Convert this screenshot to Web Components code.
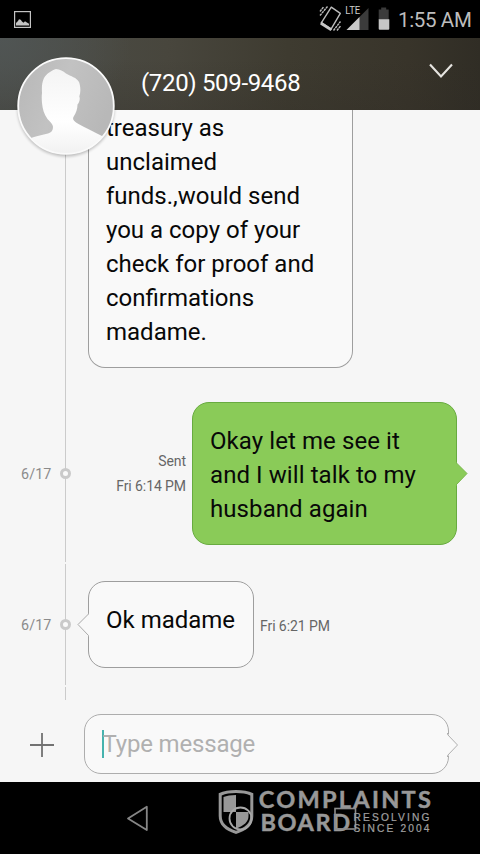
<!DOCTYPE html>
<html lang="en">
<head>
<meta charset="utf-8">
<title>Messages</title>
<style>
html,body{margin:0;height:100%;background:#000}
body{font-family:Roboto,"Liberation Sans",sans-serif}
</style>
</head>
<body>
<phone-screen></phone-screen>
<script>
const define = (name, html) => {
  const t = document.createElement('template');
  t.innerHTML = html;
  customElements.define(name, class extends HTMLElement {
    constructor() {
      super();
      this.attachShadow({ mode: 'open' }).appendChild(t.content.cloneNode(true));
    }
  });
};

define('status-bar', `
<style>
:host{display:flex;align-items:center;height:38px;background:#000;color:#bdbdbd;box-sizing:border-box;padding:0 9px 0 14px}
svg{display:block;flex:none}
.sp{flex:1}
.time{font-size:20.5px;line-height:38px;padding-top:2px;margin-left:7px;width:73px;white-space:nowrap;letter-spacing:-.35px}
</style>
<svg width="17" height="17" viewBox="0 0 17 17"><rect x=".6" y=".6" width="15.8" height="15.8" fill="none" stroke="#c4c4c4" stroke-width="1.2"/><path d="M2 14.500V12l2-2 1-1.700 1.700.5L8 10.500l1.500 1.300 1.500-1.500 1.500 1 2.500 1.400v1.800z" fill="#c4c4c4"/></svg>
<span class="sp"></span>
<svg width="73" height="38" viewBox="0 0 73 38">
<path d="M13.300 7.200 22.300 13.300 13.200 28.800 3.300 22.800z" fill="none" stroke="#bdbdbd" stroke-width="1.400" stroke-linejoin="round"/>
<path d="M3.200 21.500 2.200 24.500 12.500 31l1.700-2z" fill="#c6c6c6"/>
<path d="M2 11.500 5.500 7M2 15.500 9.500 6.500M15.500 30.500 22.500 21.500M19 30.500 22.500 26" stroke="#bdbdbd" stroke-width="1.400" stroke-dasharray="2.500 .6"/>
<path d="M50.500 8v22H28.500z" fill="#3b3b3b"/><path d="M41.500 17v13H28.500z" fill="#cacaca"/>
<rect x="26" y="5" width="16" height="10.500" fill="#000"/>
<text x="27.300" y="14.200" font-family="Roboto,sans-serif" font-size="10.300" fill="#cdcdcd" textLength="15" lengthAdjust="spacingAndGlyphs">LTE</text>
<path d="M60.700 9.500h2.500V7.500h5v2h2.500V20h-10z" fill="#3b3b3b"/><path d="M60.700 19.300h10.600v9.400q0 1-1 1h-8.600q-1 0-1-1z" fill="#c6c6c6"/>
</svg>
<span class="time">1:55 AM</span>`);

define('contact-header', `
<style>
:host{display:flex;height:72px;position:relative;z-index:2;color:#fff;
background:radial-gradient(ellipse 130px 110px at 0 0,#505554,#50555400),linear-gradient(180deg,#2f2b2500 30%,#2f2b2540),linear-gradient(90deg,#4b4d48,#48463d 35%,#3e3b30 60%,#38342a 85%,#302d25)}
.name{margin:30px 0 0 141px;font-size:24px;line-height:30px;white-space:nowrap;letter-spacing:-.34px}
.chev{margin:24px 26px 0 auto;display:block}
.avatar{position:absolute;left:15px;top:17px;display:block}
</style>
<span class="name"><slot></slot></span>
<svg class="chev" width="26" height="18" viewBox="0 0 26 18"><path d="M2 2.500 13 14.500 24 2.500" fill="none" stroke="#e6e4e0" stroke-width="2.100"/></svg>
<svg class="avatar" width="102" height="106" viewBox="0 0 102 106">
<defs><linearGradient id="g" x2="0" y2="1"><stop offset="0" stop-color="#f4f4f4"/><stop offset=".6" stop-color="#fff"/><stop offset="1" stop-color="#f0f0f0"/></linearGradient>
<linearGradient id="b" x2="1" y2=".4"><stop offset="0" stop-color="#b7b7b7"/><stop offset=".5" stop-color="#c2c2c2"/><stop offset="1" stop-color="#b8b8b8"/></linearGradient>
<clipPath id="c"><circle cx="51" cy="51" r="48"/></clipPath>
<filter id="s" x="-10%" y="-10%" width="120%" height="125%"><feGaussianBlur stdDeviation="1.500"/></filter></defs>
<circle cx="51" cy="53" r="48.500" fill="#000" opacity=".24" filter="url(#s)"/>
<circle cx="51" cy="51" r="48" fill="url(#b)"/>
<path clip-path="url(#c)" fill="url(#g)" d="M41 14C37 15.500 32 18 29 23 26.500 28 26.800 34 27 38c-.5 4-.2 7 0 10 .5 6 2 11 5.500 16 2.500 3 5.500 5 5.500 8 0 3.500-1.500 5.500-5 6.500C26 80 19 81.500 14 84 6 88 2 92 2 102h98V86c-4-1-8-2-14-5.500-8-4-16-8-22.500-11.500C58 66 57 64 59 61c2-3 3.500-7 3.500-11.500C64 48 65.500 44 64.300 41.500 66 37 65.500 31 64 27 61.500 22.500 56 21.500 51 18.500 48 16 45 14.500 41 14z"/>
<circle cx="51" cy="51" r="47.800" fill="none" stroke="#fafafa" stroke-width="1.800"/>
</svg>`);

define('timeline-row', `
<style>
:host{display:flex;align-items:center;position:relative;flex:none;box-sizing:border-box;padding-left:88px;
background:linear-gradient(#cbcbcb,#cbcbcb) 65px 0/1px 100% no-repeat}
:host([out]){justify-content:flex-end;padding-right:23px}
.date{position:absolute;left:21px;top:50%;margin-top:-10px;font-size:14.300px;line-height:20px;color:#8b8b8b;white-space:nowrap;letter-spacing:.1px}
.dot{position:absolute;left:60px;top:50%;margin-top:-5.500px;width:11px;height:11px;box-sizing:border-box;border:3.200px solid #cacaca;border-radius:50%;background:#fafafa}
:host([plain]) .dot,:host([plain]) .date{display:none}
</style>
<span class="date"><slot name="date"></slot></span><i class="dot"></i>
<slot></slot>`);

define('message-bubble', `
<style>
:host{display:block;position:relative;box-sizing:border-box;border:1px solid #9e9e9e;border-radius:17px;background:#f9f9f9;padding:21px 17px 18px;font-size:24px;line-height:34px;color:#080808;white-space:nowrap}
:host([side=out]){background:#8acb58;border-color:#68ab40;letter-spacing:.08px}
:host([cut]){border-top:0;border-radius:0 0 17px 17px;padding-top:0}
svg{position:absolute;top:50%;display:none}
:host([side=in]) .l{display:block;left:-12px;margin-top:-11.500px}
:host([side=out]) .r{display:block;right:-12px;margin-top:-12px}
</style>
<slot></slot>
<svg class="l" width="13" height="24" viewBox="0 0 13 24"><path d="M13 .5 11.500 1 1 12l10.500 11 1.500.5z" fill="#f9f9f9"/><path d="M11.500 0V1L1 11.500 11.500 22.500V24" fill="none" stroke="#aaa"/></svg>
<svg class="r" width="13" height="24" viewBox="0 0 13 24"><path d="M0 0 1.500 1 12 11.500 1.500 22.500 0 23z" fill="#8acb58"/><path d="M1.500 0V1L12 11.500 1.500 22.500V24" fill="none" stroke="#78b84b"/></svg>`);

define('message-meta', `
<style>:host{display:block;font-size:14px;line-height:25px;color:#666;white-space:nowrap;text-align:right;margin:0 6px;letter-spacing:-.08px}
:host([low]){padding-top:4px}</style><slot></slot>`);

define('message-composer', `
<style>
:host{display:flex;align-items:flex-start;height:82px;background:#f6f6f6;box-sizing:border-box;padding:14px 0 0 30px}
.plus{margin:19px 30px 0 0;flex:none}
.box{position:relative;width:365px;height:60px;box-sizing:border-box;border:1px solid #adadad;border-radius:17px;background:#f9f9f9;display:flex;align-items:center;padding-left:17px}
.caret{width:2px;height:28px;background:#46b3ae;margin-top:-1px}
.ph{font-size:24px;line-height:34px;color:#b0b0b0;white-space:nowrap;margin-left:-1.500px;letter-spacing:-.18px}
.tail{position:absolute;right:-11px;top:18px}
</style>
<svg class="plus" width="24" height="24" viewBox="0 0 24 24"><path d="M12 0v24M0 12h24" stroke="#727272" stroke-width="1.800"/></svg>
<div class="box"><i class="caret"></i><span class="ph"><slot></slot></span>
<svg class="tail" width="13" height="24" viewBox="0 0 13 24"><path d="M0 1H2L12 12 2 23H0z" fill="#f9f9f9"/><path d="M1.500 0V1.500L11.500 12 1.500 22.500V24" fill="none" stroke="#b0b0b0"/></svg></div>`);

define('nav-bar', `
<style>:host{display:block;height:72px;background:#000}svg{display:block}</style>
<svg width="480" height="72" viewBox="0 782 480 72">
<path d="M146.800 806.800V830L128 818.400z" fill="none" stroke="#868686" stroke-width="1.800" stroke-linejoin="round"/>
<path d="M236 790c6.500 0 12.500 1 17.300 3.200V816c0 9-6.300 14.500-17.300 18-11-3.500-17.300-9-17.300-18V793.200C223.500 791 229.500 790 236 790z" fill="#989898"/>
<path d="M236 793c5.500 0 10.500.8 14.300 2.400V816c0 7-5 11.500-14.300 14.800-9.300-3.300-14.300-7.800-14.300-14.800V795.400C225.500 793.800 230.500 793 236 793z" fill="#000"/>
<path d="M236 795V812H223.500V797c3-1.200 7.500-2 12.500-2zM236 812h12.500v4c0 6-4.500 9.500-12.500 12.700z" fill="#989898"/>
<circle cx="240.500" cy="818.500" r="11" fill="none" stroke="#a8a8a8" stroke-width="1.800"/>
<g fill="#989898" stroke="#989898" stroke-width=".5" font-family="Lato,sans-serif" font-weight="700">
<text x="258.800" y="808.300" font-size="23.500" textLength="172" lengthAdjust="spacing">COMPLAINTS</text>
<text x="260.500" y="830.800" font-size="23.500" textLength="89.500" lengthAdjust="spacing">BOARD</text></g>
<rect x="335" y="808.500" width="20.500" height="20.500" fill="none" stroke="#8c8c8c" stroke-width="1.600"/>
<g fill="#a0a0a0" stroke="#a0a0a0" stroke-width=".2" font-family="'Liberation Sans',sans-serif">
<text x="353.500" y="820.800" font-size="10.200" textLength="76" lengthAdjust="spacing">RESOLVING</text>
<text x="353.500" y="831.600" font-size="10.200" textLength="76" lengthAdjust="spacing">SINCE 2004</text></g>
</svg>`);

define('phone-screen', `
<style>
:host{display:flex;flex-direction:column;width:480px;height:854px;overflow:hidden;background:#f6f6f6}
.thread{height:590px;flex:none;display:flex;flex-direction:column;gap:2px;overflow:hidden}
.r1{height:275px;margin-bottom:-2px;align-items:flex-start}
.r2{height:177px}.r3{height:121px}.r4{height:13px}
.b1{width:265px;padding-top:1px}.b2{width:265px}.b3{width:166px;height:87px}
</style>
<status-bar></status-bar>
<contact-header>(720) 509-9468</contact-header>
<div class="thread">
<timeline-row class="r1" plain><message-bubble cut class="b1">treasury as<br>unclaimed<br>funds.,would send<br>you a copy of your<br>check for proof and<br>confirmations<br>madame.</message-bubble></timeline-row>
<timeline-row class="r2" out><span slot="date">6/17</span><message-meta>Sent<br>Fri 6:14 PM</message-meta><message-bubble side="out" class="b2">Okay let me see it<br>and I will talk to my<br>husband again</message-bubble></timeline-row>
<timeline-row class="r3"><span slot="date">6/17</span><message-bubble side="in" class="b3">Ok madame</message-bubble><message-meta low>Fri 6:21 PM</message-meta></timeline-row>
<timeline-row class="r4" plain></timeline-row>
</div>
<message-composer>Type message</message-composer>
<nav-bar></nav-bar>`);
</script>
</body>
</html>
